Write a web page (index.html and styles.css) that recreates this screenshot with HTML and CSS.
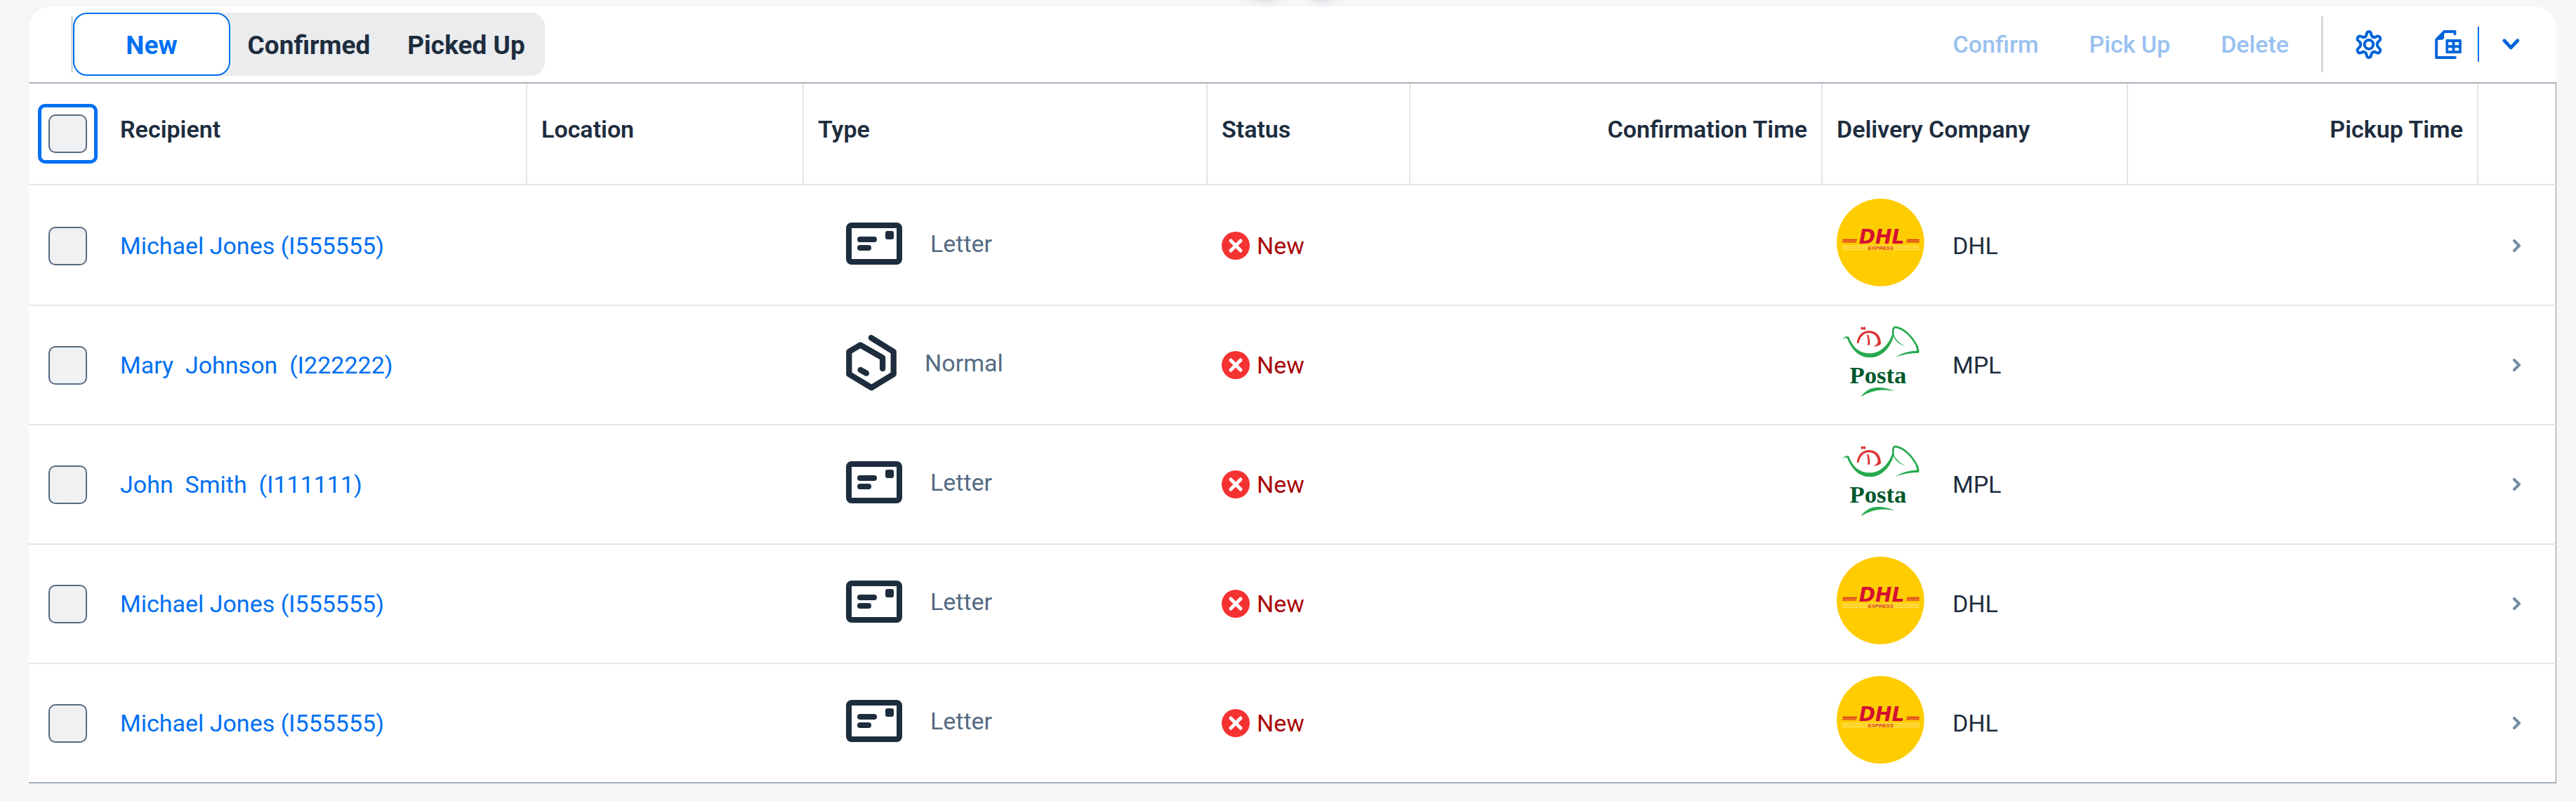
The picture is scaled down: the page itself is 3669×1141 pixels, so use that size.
FILE: index.html
```html
<!DOCTYPE html>
<html lang="en">
<head>
<meta charset="utf-8">
<title>Packages</title>
<link rel="stylesheet" href="styles.css">
</head>
<body>
<svg class="sprite" aria-hidden="true">
  <symbol id="letter" viewBox="0 0 80 60">
    <rect x="4" y="4" width="72" height="52" rx="4" fill="none" stroke="currentColor" stroke-width="8"/>
    <rect x="16" y="20" width="28" height="8" rx="4"/>
    <rect x="16" y="32" width="20" height="8" rx="4"/>
    <rect x="56" y="12" width="12" height="12" rx="3"/>
  </symbol>
  <symbol id="parcel" viewBox="30 54 217 240">
    <path d="M138 66 L234 126 V222 L139 280 L43 222 V126 L91 97 L187 152 V198 M92 204 L117 218" fill="none" stroke="currentColor" stroke-width="25" stroke-linecap="round" stroke-linejoin="round"/>
  </symbol>
  <symbol id="error" viewBox="0 0 40 40">
    <circle cx="20" cy="20" r="20"/>
    <path d="M13 13 L27 27 M27 13 L13 27" stroke="#fff" stroke-width="5" stroke-linecap="round"/>
  </symbol>
  <symbol id="next" viewBox="0 0 12 18">
    <path d="M2 2 L9 9 L2 16" fill="none" stroke="currentColor" stroke-width="4" stroke-linecap="round" stroke-linejoin="round"/>
  </symbol>
  <symbol id="dhl" viewBox="0 0 375 375">
    <circle cx="187" cy="187" r="187" fill="#fc0"/>
    <path d="M26 175 H87 M25 180 H85 M24 186 H83 M301 175 H353 M299 180 H353 M297 186 H353" stroke="#d40f33" stroke-width="3"/>
    <path d="M24 202 H353 M24 210 H353 M24 218 H353" stroke="#ffe680" stroke-width="3"/>
  </symbol>
  <symbol id="posta" viewBox="48 39 375 375">
    <g fill="#27a94f">
      <path d="M72 131 Q84 113 100 119 C120 175 155 190 190 190 C240 190 275 145 287 102 L293 110 C280 165 240 208 190 208 C140 208 110 170 93 127 Q84 121 72 131Z"/>
      <path d="M287 100 C298 132 315 147 340 159 C308 152 285 125 287 90Z"/>
      <path d="M390 158 C403 175 403 184 397 189 C370 189 330 194 299 207 C330 185 365 180 388 180 C392 176 390 170 386 162Z"/>
      <path d="M151 376 Q195 312 295 351 Q215 335 151 376Z"/>
    </g>
    <path d="M290 118 C286 85 290 76 305 79 C345 88 378 130 395 168" fill="none" stroke="#27a94f" stroke-width="8"/>
    <g fill="#dc3232">
      <path d="M134 147 C138 110 160 95 185 93 C215 94 237 112 237 150 C230 158 218 161 203 161 Q222 154 224 140 C222 115 205 103 185 103 C165 103 148 118 142 147Z"/>
      <path d="M176 110 L184 112 Q191 130 190 154 L180 156 Q184 132 176 110Z"/>
    </g>
    <path d="M152 80 L171 87 M153 87 L170 79" stroke="#dc3232" stroke-width="7"/>
  </symbol>
</svg>

<main class="page">
  <div class="floating" aria-hidden="true"><span></span><span></span></div>
  <section class="panel">
    <header class="toolbar">
      <span class="separator"></span>
      <div class="segments">
        <button class="segment selected" type="button" aria-pressed="true">New</button>
        <button class="segment" type="button">Confirmed</button>
        <button class="segment" type="button">Picked Up</button>
      </div>
      <div class="actions">
        <button class="action" type="button" disabled>Confirm</button>
        <button class="action" type="button" disabled>Pick Up</button>
        <button class="action" type="button" disabled>Delete</button>
        <span class="separator"></span>
        <button class="icon-button" type="button" aria-label="Settings">
          <svg width="38" height="41" viewBox="45 69 112 123" fill="none" stroke="currentColor" stroke-width="12">
            <path d="M91 88 Q92 75 101 75 Q110 75 111 88 Q114 100 126 100 Q140 90 147 98 Q155 108 144 116 Q136 122 136 130 Q136 138 144 145 Q155 153 147 163 Q140 171 126 161 Q114 161 111 173 Q110 186 101 186 Q92 186 91 173 Q88 161 76 161 Q62 171 55 163 Q47 153 58 145 Q66 138 66 130 Q66 122 58 116 Q47 108 55 98 Q62 90 76 100 Q88 100 91 88Z"/>
            <circle cx="101" cy="130" r="19"/>
          </svg>
        </button>
        <div class="split">
          <button class="export" type="button" aria-label="Export">
            <svg width="38" height="41" viewBox="385 69 113 123">
              <path d="M470 85 V75 H424 L391 110 V186 H471" fill="none" stroke="currentColor" stroke-width="12" stroke-linecap="round" stroke-linejoin="round"/>
              <path d="M424 75 V100 Q424 110 414 110 H391Z" fill="currentColor"/>
              <path d="M435 108 H494 Q498 108 498 112 V164 Q498 168 494 168 H435 Q431 168 431 164 V112 Q431 108 435 108Z M442 120 V133 H458 V120Z M470 120 V133 H487 V120Z M442 144 V157 H458 V144Z M470 144 V157 H487 V144Z" fill="currentColor" fill-rule="evenodd"/>
            </svg>
          </button>
          <button class="export-menu" type="button" aria-label="Export options">
            <svg width="25" height="16" viewBox="671 107 75 47"><path d="M680 115 L708 145 L736 115" fill="none" stroke="currentColor" stroke-width="15" stroke-linecap="round" stroke-linejoin="round"/></svg>
          </button>
        </div>
      </div>
    </header>

    <table class="grid">
      <colgroup>
        <col class="c-select"><col class="c-recipient"><col class="c-location"><col class="c-type"><col class="c-status"><col class="c-confirmation"><col class="c-company"><col class="c-pickup"><col class="c-nav">
      </colgroup>
      <thead>
        <tr>
          <th class="select"><label class="check focused"><input type="checkbox" aria-label="Select all"></label></th>
          <th>Recipient</th>
          <th>Location</th>
          <th>Type</th>
          <th>Status</th>
          <th class="end">Confirmation Time</th>
          <th>Delivery Company</th>
          <th class="end">Pickup Time</th>
          <th class="nav"></th>
        </tr>
      </thead>
      <tbody>
        <tr>
          <td class="select"><label class="check"><input type="checkbox" aria-label="Select row"></label></td>
          <td><a href="#">Michael Jones (I555555)</a></td>
          <td></td>
          <td><div class="type"><svg width="80" height="60"><use href="#letter"/></svg>Letter</div></td>
          <td><div class="status"><svg width="40" height="40"><use href="#error"/></svg>New</div></td>
          <td></td>
          <td><div class="carrier"><svg width="125" height="125" viewBox="0 0 375 375"><use href="#dhl"/><text class="dhl-name" x="192" y="191">DHL</text><text class="dhl-sub" x="188" y="219">EXPRESS</text></svg>DHL</div></td>
          <td></td>
          <td class="nav"><svg width="12" height="18"><use href="#next"/></svg></td>
        </tr>
        <tr>
          <td class="select"><label class="check"><input type="checkbox" aria-label="Select row"></label></td>
          <td><a href="#">Mary  Johnson  (I222222)</a></td>
          <td></td>
          <td><div class="type"><svg width="72" height="80"><use href="#parcel"/></svg>Normal</div></td>
          <td><div class="status"><svg width="40" height="40"><use href="#error"/></svg>New</div></td>
          <td></td>
          <td><div class="carrier"><svg width="125" height="125" viewBox="0 0 375 375"><use href="#posta"/><text class="posta-name" x="177" y="278">Posta</text></svg>MPL</div></td>
          <td></td>
          <td class="nav"><svg width="12" height="18"><use href="#next"/></svg></td>
        </tr>
        <tr>
          <td class="select"><label class="check"><input type="checkbox" aria-label="Select row"></label></td>
          <td><a href="#">John  Smith  (I111111)</a></td>
          <td></td>
          <td><div class="type"><svg width="80" height="60"><use href="#letter"/></svg>Letter</div></td>
          <td><div class="status"><svg width="40" height="40"><use href="#error"/></svg>New</div></td>
          <td></td>
          <td><div class="carrier"><svg width="125" height="125" viewBox="0 0 375 375"><use href="#posta"/><text class="posta-name" x="177" y="278">Posta</text></svg>MPL</div></td>
          <td></td>
          <td class="nav"><svg width="12" height="18"><use href="#next"/></svg></td>
        </tr>
        <tr>
          <td class="select"><label class="check"><input type="checkbox" aria-label="Select row"></label></td>
          <td><a href="#">Michael Jones (I555555)</a></td>
          <td></td>
          <td><div class="type"><svg width="80" height="60"><use href="#letter"/></svg>Letter</div></td>
          <td><div class="status"><svg width="40" height="40"><use href="#error"/></svg>New</div></td>
          <td></td>
          <td><div class="carrier"><svg width="125" height="125" viewBox="0 0 375 375"><use href="#dhl"/><text class="dhl-name" x="192" y="191">DHL</text><text class="dhl-sub" x="188" y="219">EXPRESS</text></svg>DHL</div></td>
          <td></td>
          <td class="nav"><svg width="12" height="18"><use href="#next"/></svg></td>
        </tr>
        <tr>
          <td class="select"><label class="check"><input type="checkbox" aria-label="Select row"></label></td>
          <td><a href="#">Michael Jones (I555555)</a></td>
          <td></td>
          <td><div class="type"><svg width="80" height="60"><use href="#letter"/></svg>Letter</div></td>
          <td><div class="status"><svg width="40" height="40"><use href="#error"/></svg>New</div></td>
          <td></td>
          <td><div class="carrier"><svg width="125" height="125" viewBox="0 0 375 375"><use href="#dhl"/><text class="dhl-name" x="192" y="191">DHL</text><text class="dhl-sub" x="188" y="219">EXPRESS</text></svg>DHL</div></td>
          <td></td>
          <td class="nav"><svg width="12" height="18"><use href="#next"/></svg></td>
        </tr>
      </tbody>
    </table>
  </section>
</main>
</body>
</html>
```
FILE: styles.css
```css
* { box-sizing: border-box; }

body {
  margin: 0;
  background: #f5f6f7;
  color: #1d2d3e;
  font-family: Roboto, "Noto Sans", sans-serif;
  font-size: 34px;
  line-height: 40px;
}

svg { display: block; flex: none; }
.sprite { position: absolute; width: 0; height: 0; }

.page { position: relative; overflow: hidden; padding: 9px 28px 25px 41px; }

/* Round buttons of the page header that hang just above the panel */
.floating {
  position: absolute;
  top: -62px;
  left: 0;
  right: 0;
  display: flex;
  justify-content: center;
  gap: 18px;
  padding-left: 15px;
  pointer-events: none;
}
.floating span {
  width: 64px;
  height: 64px;
  border-radius: 50%;
  background: #e1e4eb;
  box-shadow: 0 0 12px rgba(34, 53, 72, 0.15);
}

.panel { background: #fff; border-radius: 32px 32px 0 0; }

/* Toolbar */
.toolbar {
  display: flex;
  align-items: center;
  height: 110px;
  padding: 0 19px 0 60px;
  border-bottom: 2px solid #a8b3bd;
}
.separator { flex: none; width: 3px; height: 80px; background: #d9d9d9; }

button {
  margin: 0;
  border: 0;
  background: none;
  color: #0064d9;
  font: inherit;
  cursor: pointer;
}

.segments { display: flex; border-radius: 20px; background: #eaecee; }
.segment {
  min-width: 224px;
  height: 90px;
  padding: 4px 20px 0;
  border: 2px solid transparent;
  border-radius: 20px;
  color: #1d2d3e;
  font-size: 37px;
  font-weight: 700;
}
.segment.selected { border-color: #0070f2; background: #fff; color: #0070f2; }

.actions { display: flex; align-items: center; gap: 20px; margin-left: auto; }
.action { height: 90px; padding: 0 26px; font-weight: 500; }
.action:disabled { color: #99c1f0; cursor: default; }
.icon-button { height: 90px; padding: 0 26px; }
.split { display: flex; align-items: center; }
.export { height: 50px; padding: 0 23px 0 29px; border-right: 2px solid #0070f2; }
.export-menu { height: 50px; padding: 0 33px; }

/* Table */
.grid { width: 100%; table-layout: fixed; border-collapse: separate; border-spacing: 0; }
.c-select { width: 3.056%; }
.c-recipient { width: 16.667%; }
.c-location { width: 10.944%; }
.c-type { width: 15.972%; }
.c-status { width: 8.028%; }
.c-confirmation { width: 16.306%; }
.c-company { width: 12.083%; }
.c-pickup { width: 13.861%; }
.c-nav { width: 3.083%; }

th {
  height: 145px;
  padding: 0 20px 14px;
  border-right: 2px solid #e5e5e5;
  border-bottom: 2px solid #e5e5e5;
  font-weight: 600;
  text-align: left;
  white-space: nowrap;
}
th.select { padding: 0 12px 0 13px; border-right: 0; }
th.end { text-align: right; }

td {
  height: 170px;
  padding: 0 20px;
  border-bottom: 2px solid #e5e5e5;
  white-space: nowrap;
}
tbody tr:first-child td { height: 172px; padding-top: 2px; }
tbody tr:last-child td { border-bottom-color: #a8b3bd; }
td.select { padding-left: 13px; padding-right: 12px; }
th.nav, td.nav { padding-right: 49px; border-right: 1px solid #8c8c8c; }
td.nav { color: #758ca4; }
td.nav svg { margin-left: auto; }

.check {
  display: grid;
  place-items: center;
  width: 85px;
  height: 85px;
  border: 5px solid transparent;
  border-radius: 10px;
}
.check.focused { border-color: #0070f2; }
.check input {
  appearance: none;
  width: 55px;
  height: 55px;
  margin: 0;
  border: 2px solid #556b82;
  border-radius: 10px;
  background: #eff1f2;
}

a { color: #0070f2; text-decoration: none; white-space: pre; }

.type {
  display: flex;
  align-items: center;
  gap: 40px;
  padding: 0 0 6px 40px;
  color: #556b82;
}
.type svg { fill: #1d2d3e; color: #1d2d3e; }
.status { display: flex; align-items: center; gap: 10px; color: #aa0808; }
.status svg { fill: #f53232; }
.carrier { display: flex; align-items: center; gap: 40px; }
.carrier svg { margin-bottom: 10px; }

/* Carrier logos */
.carrier text { text-anchor: middle; }
.dhl-name { fill: #d40f33; font: italic 700 84px "DejaVu Sans", sans-serif; }
.dhl-sub { fill: #d8401a; font: italic 700 23px "Liberation Sans", sans-serif; }
.posta-name { fill: #00582b; font: 700 104px "Liberation Serif", serif; }
```
